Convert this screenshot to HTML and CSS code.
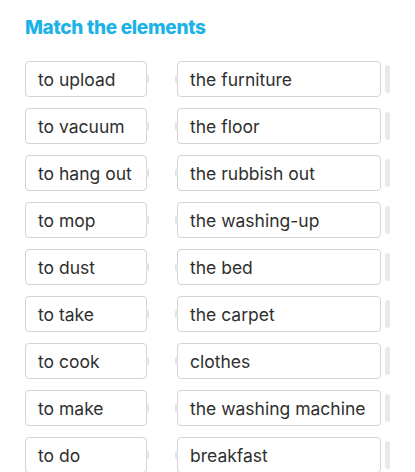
FILE: index.html
```html
<!DOCTYPE html>
<html lang="en">
<head>
    <meta charset="UTF-8">
    <title>Match the elements</title>
    <link rel="stylesheet" href="styles.css">
</head>
<body>
    <h2 class="title">Match the elements</h2>

    <div class="board">
        <div class="row"><div class="word left">to upload</div><div class="word right">the furniture</div><span class="handle"></span></div>
        <div class="row"><div class="word left">to vacuum</div><div class="word right">the floor</div><span class="handle"></span></div>
        <div class="row"><div class="word left">to hang out</div><div class="word right">the rubbish out</div><span class="handle"></span></div>
        <div class="row"><div class="word left">to mop</div><div class="word right">the washing-up</div><span class="handle"></span></div>
        <div class="row"><div class="word left">to dust</div><div class="word right">the bed</div><span class="handle"></span></div>
        <div class="row"><div class="word left">to take</div><div class="word right">the carpet</div><span class="handle"></span></div>
        <div class="row"><div class="word left">to cook</div><div class="word right">clothes</div><span class="handle"></span></div>
        <div class="row"><div class="word left">to make</div><div class="word right">the washing machine</div><span class="handle"></span></div>
        <div class="row"><div class="word left">to do</div><div class="word right">breakfast</div><span class="handle"></span></div>
    </div>
</body>
</html>
```

FILE: styles.css
```css
* {
    box-sizing: border-box;
    margin: 0;
    padding: 0;
}

body {
    font-family: 'Inter', 'Noto Sans', sans-serif;
    background: #ffffff;
    color: #2f2f2f;
    padding: 16px 0 0 25px;
    overflow: hidden;
}

.title {
    font-size: 19px;
    font-weight: 800;
    color: #1bb3e6;
    letter-spacing: -0.3px;
    line-height: 24px;
    margin-bottom: 21px;
}

.board {
    display: flex;
    flex-direction: column;
    gap: 11px;
}

.row {
    display: flex;
    align-items: center;
}

.word {
    position: relative;
    height: 36px;
    display: flex;
    align-items: center;
    padding-left: 12px;
    border: 1px solid #d4d4d4;
    border-radius: 4px;
    font-size: 17.5px;
    white-space: nowrap;
}

.left {
    width: 122px;
    margin-right: 30px;
}

.right {
    width: 204px;
}

/* little connector nubs on the box edges */
.left::after,
.right::before {
    content: '';
    position: absolute;
    top: 13px;
    width: 3px;
    height: 8px;
    background: #e3e3e3;
    border-radius: 2px;
}

.left::after {
    right: -3px;
}

.right::before {
    left: -3px;
}

.handle {
    width: 5px;
    height: 28px;
    margin-left: 4px;
    border-radius: 3px;
    background: #e6eaef;
}
```
